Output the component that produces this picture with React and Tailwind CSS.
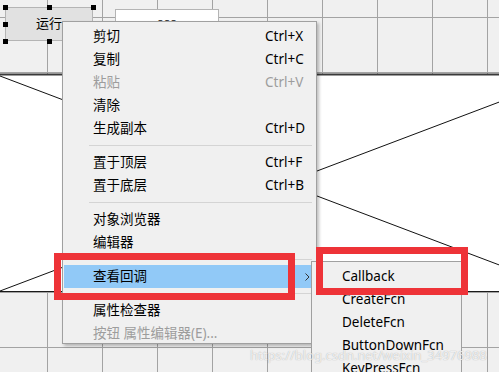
const menuItems = [
  { label: "剪切", key: "Ctrl+X" },
  { label: "复制", key: "Ctrl+C" },
  { label: "粘贴", key: "Ctrl+V", disabled: true },
  { label: "清除" },
  { label: "生成副本", key: "Ctrl+D" },
  { sep: true },
  { label: "置于顶层", key: "Ctrl+F" },
  { label: "置于底层", key: "Ctrl+B" },
  { sep: true },
  { label: "对象浏览器" },
  { label: "编辑器" },
  { sep: true },
  { label: "查看回调", active: true, sub: true },
  { sep: true },
  { label: "属性检查器" },
  { label: "按钮 属性编辑器(E)...", disabled: true },
];

const subItems = ["Callback", "CreateFcn", "DeleteFcn", "ButtonDownFcn", "KeyPressFcn"];

function Canvas() {
  const xs = [47.5, 102.5, 157.5, 212.5, 267.5, 322.5, 377.5, 432.5, 487.5];
  const ys = [17.5, 72.5, 127.5, 182.5, 237.5, 292.5, 347.5];
  return (
    <svg className="absolute inset-0" width="499" height="372" viewBox="0 0 499 372">
      {xs.map((x) => (
        <line key={"v" + x} x1={x} y1="0" x2={x} y2="372" stroke="#a3a3a3" strokeWidth="1" />
      ))}
      {ys.map((y) => (
        <line key={"h" + y} x1="0" y1={y} x2="499" y2={y} stroke="#a3a3a3" strokeWidth="1" />
      ))}
      {/* axes placeholder */}
      <rect x="-2" y="74" width="620" height="218" fill="#ffffff" />
      <line x1="0" y1="74.5" x2="499" y2="74.5" stroke="#3a3a3a" strokeWidth="2" />
      <line x1="0" y1="291.5" x2="499" y2="291.5" stroke="#1a1a1a" strokeWidth="1" />
      <line x1="0" y1="76" x2="568" y2="291" stroke="#111" strokeWidth="1" />
      <line x1="0" y1="291" x2="568" y2="76" stroke="#111" strokeWidth="1" />
    </svg>
  );
}

function Handle({ x, y }) {
  return <div className="absolute w-[5px] h-[5px] bg-black" style={{ left: x - 2, top: y - 2 }} />;
}

export default function App() {
  return (
    <div
      className="relative w-[499px] h-[372px] overflow-hidden bg-[#f0f0f0] text-black"
      style={{ fontFamily: "'Noto Sans', 'Noto Sans CJK SC', sans-serif" }}
    >
      <Canvas />

      {/* run button with selection handles */}
      <div className="absolute left-[5px] top-[7px] w-[88px] h-[34px] bg-[#e1e1e1] border border-[#b4b4b4] flex items-center justify-center text-[13px]">
        运行
      </div>
      <Handle x={5} y={7} />
      <Handle x={49} y={7} />
      <Handle x={93} y={7} />
      <Handle x={5} y={24} />
      <Handle x={5} y={41} />
      <Handle x={49} y={41} />

      {/* edit box */}
      <div className="absolute left-[115px] top-[9px] w-[104px] h-[30px] bg-white border border-[#b4b4b4] flex justify-center pt-[6px] text-[11px] leading-none text-[#222]">
        ooo
      </div>

      {/* context menu */}
      <div className="absolute left-[62px] top-[21px] w-[255px] h-[323px] bg-[#f0f0f0] border border-[#a0a0a0] shadow-[2px_2px_3px_rgba(0,0,0,0.25)] pt-[3px] text-[13.5px]">
        {menuItems.map((it, i) =>
          it.sep ? (
            <div key={i} className="h-[11px] flex items-center ml-[26px] mr-[4px]">
              <div className="h-px w-full bg-[#d4d4d4]" />
            </div>
          ) : (
            <div
              key={i}
              className={`relative h-[23px] mx-[1px] flex items-center ${it.active ? "bg-[#91c9f7]" : ""} ${it.disabled ? "text-[#9d9d9d]" : "text-black"}`}
            >
              <span className="w-[201px] pl-[29px] whitespace-nowrap">{it.label}</span>
              {it.key && <span className="whitespace-nowrap">{it.key}</span>}
              {it.sub && (
                <svg className="absolute right-[5px] top-[8px]" width="5" height="8" viewBox="0 0 5 8">
                  <polyline points="0.5,0.5 4,4 0.5,7.5" fill="none" stroke="#333" strokeWidth="1" />
                </svg>
              )}
            </div>
          )
        )}
      </div>

      {/* submenu */}
      <div className="absolute left-[311px] top-[261px] w-[151px] h-[130px] bg-[#f0f0f0] border border-[#a0a0a0] pt-[3px] text-[13.5px]">
        {subItems.map((s) => (
          <div key={s} className="h-[23px] flex items-center pl-[30px] whitespace-nowrap">
            {s}
          </div>
        ))}
      </div>

      {/* annotation boxes */}
      <div className="absolute left-[54px] top-[253px] w-[241px] h-[47px] border-[7px] border-[#ee3338]" />
      <div className="absolute left-[316px] top-[247px] w-[152px] h-[48px] border-[7px] border-[#ee3338]" />

      {/* watermark */}
      <div
        className="absolute left-[250px] top-[346px] text-[13px] text-white/80 whitespace-nowrap"
        style={{ textShadow: "0 0 1px rgba(0,0,0,0.35)" }}
      >
        https://blog.csdn.net/weixin_34976988
      </div>
    </div>
  );
}
